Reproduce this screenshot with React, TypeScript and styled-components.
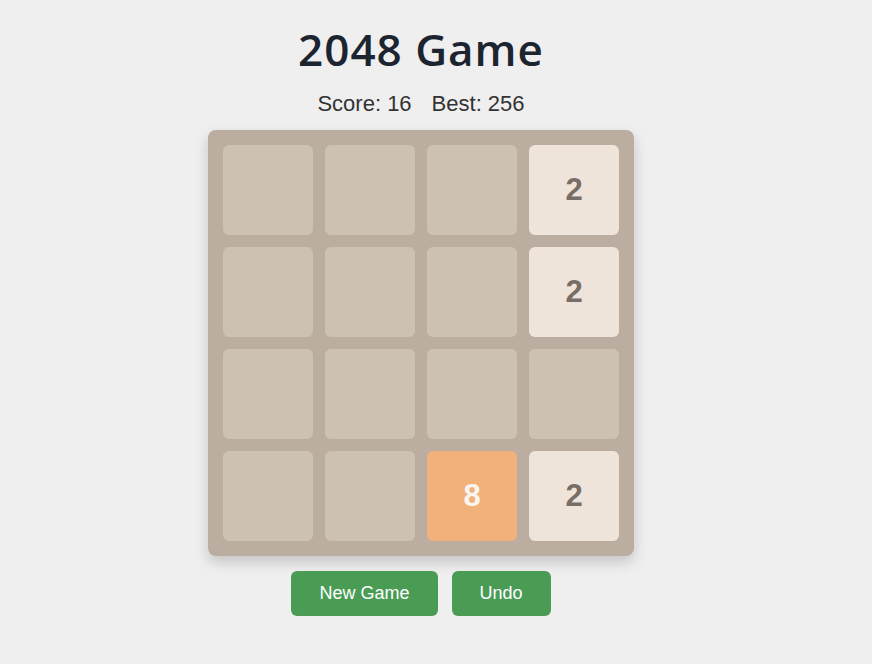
import styled, { createGlobalStyle } from 'styled-components';

const GlobalStyle = createGlobalStyle`
  body {
    margin: 0;
    background: #efefef;
    font-family: "Liberation Sans", Arial, sans-serif;
  }
`;

const board: number[][] = [
  [0, 0, 0, 2],
  [0, 0, 0, 2],
  [0, 0, 0, 0],
  [0, 0, 8, 2],
];

const tileColors: Record<number, { bg: string; fg: string }> = {
  0: { bg: '#cdc1b4', fg: 'transparent' },
  2: { bg: '#eee4da', fg: '#776e65' },
  4: { bg: '#ede0c8', fg: '#776e65' },
  8: { bg: '#f2b179', fg: '#f9f6f2' },
};

export default function App() {
  return (
    <>
      <GlobalStyle />
      <Page>
        <Title>2048 Game</Title>
        <ScoreLine>
          <span>Score: 16</span>
          <span>Best: 256</span>
        </ScoreLine>
        <Board>
          {board.flat().map((value, i) => (
            <Tile key={i} $value={value}>
              {value > 0 ? value : ''}
            </Tile>
          ))}
        </Board>
        <Controls>
          <Button>New Game</Button>
          <Button>Undo</Button>
        </Controls>
      </Page>
    </>
  );
}

const Page = styled.div`
  width: 842px;
  display: flex;
  flex-direction: column;
  align-items: center;
  padding-top: 22px;
`;

const Title = styled.h1`
  margin: 0;
  font-family: "Open Sans", "Noto Sans", sans-serif;
  font-weight: 600;
  font-size: 44px;
  letter-spacing: 1px;
  line-height: 54px;
  color: #1c2430;
`;

const ScoreLine = styled.div`
  display: flex;
  gap: 20px;
  margin-top: 16px;
  font-size: 22px;
  line-height: 24px;
  color: #333;
`;

const Board = styled.div`
  margin-top: 14px;
  display: grid;
  grid-template-columns: repeat(4, 90px);
  grid-auto-rows: 90px;
  gap: 12px;
  padding: 15px;
  background: #bbada0;
  border-radius: 8px;
  box-shadow: 0 6px 14px rgba(0, 0, 0, 0.18);
`;

const Tile = styled.div<{ $value: number }>`
  display: flex;
  align-items: center;
  justify-content: center;
  border-radius: 6px;
  font-size: 31px;
  font-weight: 700;
  background: ${({ $value }) => (tileColors[$value] ?? tileColors[8]).bg};
  color: ${({ $value }) => (tileColors[$value] ?? tileColors[8]).fg};
`;

const Controls = styled.div`
  display: flex;
  gap: 14px;
  margin-top: 15px;
`;

const Button = styled.button`
  height: 45px;
  padding: 0 28px;
  border: none;
  border-radius: 6px;
  background: #4a9c55;
  color: #fff;
  font-family: "Liberation Sans", Arial, sans-serif;
  font-size: 18px;
  cursor: pointer;
`;
